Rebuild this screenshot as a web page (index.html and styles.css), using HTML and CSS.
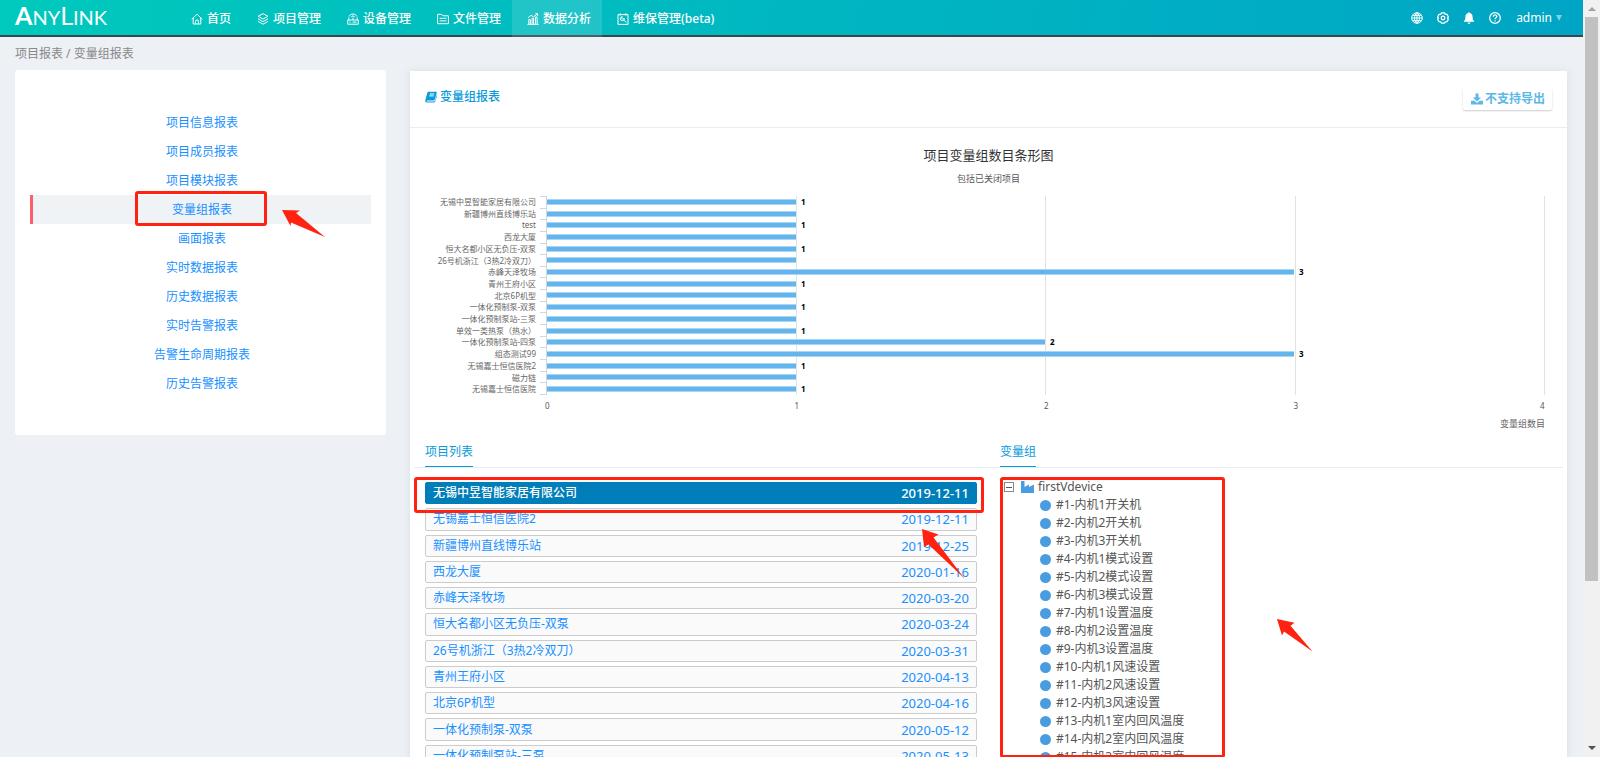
FILE: index.html
```html
<!DOCTYPE html>
<html lang="zh-CN">
<head>
<meta charset="utf-8">
<title>变量组报表</title>
<link rel="stylesheet" href="styles.css">
</head>
<body>
<div class="app">
  <header class="topbar">
    <a class="logo" href="#"><b>A</b><small>NY</small><b class="thin">L</b><small>INK</small></a>
    <nav class="nav">
      <a href="#"><svg viewBox="0 0 12 12"><path d="M.7 6.2 6 1.2l5.3 5M2.2 5v6h7.6V5M4.6 11V8.3a1.4 1.4 0 0 1 2.8 0V11"/></svg>首页</a>
      <a href="#"><svg viewBox="0 0 12 12"><path d="M6 .7 11 3.300 6 6 1 3.300zM1 5.800l5 2.800 5-2.800M1 8.400l5 2.800 5-2.800"/></svg>项目管理</a>
      <a href="#"><svg viewBox="0 0 12 12"><path d="M1.800 7V4.500M10.200 7V4.500M.7 7h10.600v4.200H.7zM2.500 9.100h1.200M5.500 9.100h4M2 3.500C3 .2 9 .2 10 3.500M4 4.300c.8-1.800 3.200-1.800 4 0M6 4.500V7"/></svg>设备管理</a>
      <a href="#"><svg viewBox="0 0 12 12"><path d="M.6 10.700V1.300h4l1.300 1.500h5.500v7.900zM2.600 5.300h6.800M2.600 7.900h6.800"/></svg>文件管理</a>
      <a href="#" class="active"><svg viewBox="0 0 12 12"><path d="M.4 11.400h11.200M1.800 11V6.500h1.500V11M5.100 11V5.300h1.500V11M8.500 11V4h1.600v7M1 4.800l3-2.500 2.500 1.500L10.500.8M8.300.7h2.300v2.200"/></svg>数据分析</a>
      <a href="#"><svg viewBox="0 0 12 12"><path d="M1 1.600h10v9.800H1zM3.200.3v2.300M8.800.3v2.300M6.800 7l2.500 2.500M7.300 5.600A2 2 0 1 1 5.400 3.700L4.500 5l1 1.100z"/></svg>维保管理(beta)</a>
    </nav>
    <div class="tools">
      <a href="#" aria-label="语言"><svg viewBox="0 0 12 12"><circle cx="6" cy="6" r="5.300"/><path d="M.7 6h10.600M6 .7v10.600M1.700 3.300h8.600M1.700 8.700h8.600M6 .7c-3.300 3-3.300 7.600 0 10.600M6 .7c3.300 3 3.300 7.600 0 10.600"/></svg></a>
      <a href="#" aria-label="设置"><svg class="bold" viewBox="0 0 12 12"><path d="M4.500.8h3l.8 1.500 1.700.1 1.400 2.500-.8 1.100.8 1.300-1.400 2.400-1.700.1-.8 1.400h-3l-.8-1.400L2 9.700.6 7.300 1.400 6 .6 4.900 2 2.400l1.700-.1z"/><circle cx="6" cy="6" r="1.800"/></svg></a>
      <a href="#" aria-label="通知"><svg class="solid" viewBox="0 0 12 12"><path d="M6 .2c.6 0 .9.400.9.900C8.800 1.600 9.600 3 9.600 5c0 2.400.5 3.300 1.600 4.300v.5H.8v-.5C1.900 8.300 2.400 7.400 2.400 5c0-2 .8-3.400 2.700-3.900 0-.5.300-.9.900-.9zM4.500 10.400h3c-.2 1-.8 1.400-1.500 1.400s-1.300-.4-1.500-1.400z"/></svg></a>
      <a href="#" aria-label="帮助"><svg class="bold" viewBox="0 0 12 12"><circle cx="6" cy="6" r="5.300"/><path d="M4.300 4.700c0-2.300 3.500-2.300 3.500-.2C7.800 5.700 6 5.700 6 7.200M6 8.200v1.200"/></svg></a>
      <button class="user" type="button">admin<i class="caret"></i></button>
    </div>
  </header>

  <div class="crumbs">项目报表 / 变量组报表</div>

  <main class="columns">
    <nav class="side">
      <a href="#">项目信息报表</a>
      <a href="#">项目成员报表</a>
      <a href="#">项目模块报表</a>
      <a href="#" class="current">变量组报表
        <span class="mark mark-menu"></span>
        <svg class="arrow arrow-menu" viewBox="0 0 44 28"><path d="M0 0 18 .5 14 3 43 27 9 12.500 8.500 16z"/></svg>
      </a>
      <a href="#">画面报表</a>
      <a href="#">实时数据报表</a>
      <a href="#">历史数据报表</a>
      <a href="#">实时告警报表</a>
      <a href="#">告警生命周期报表</a>
      <a href="#">历史告警报表</a>
    </nav>

    <section class="report">
      <div class="report-head">
        <h1><svg viewBox="0 0 12 12"><path d="M3.800.8h7c.8 0 1.100.5.900 1.200L9.800 8.600c-.2.600-.6.900-1.200.9H2.300c-.8 0-1 .900-.2.900h6.700c.7 0 1.100-.3 1.300-.9l1.400-5.200c.5.300.5.600.3 1.200l-1.500 4.800c-.3.900-.9 1.200-1.700 1.200H1.800C.7 11.500 0 10.600.3 9.500L2.200 2.200C2.500 1.300 3 .8 3.800.8z"/><path class="cut" d="M4.800 3h4.400M4.300 4.900h4.400"/></svg>变量组报表</h1>
        <button class="export" type="button"><svg viewBox="0 0 12 12"><path d="M4.500.5h3v4h2.700L6 8.500 1.800 4.500h2.700zM0 7.800h3.500L6 10l2.500-2.200H12v3.700H0z"/></svg>不支持导出</button>
      </div>

      <figure class="chart">
        <figcaption><strong>项目变量组数目条形图</strong><span>包括已关闭项目</span></figcaption>
        <div class="plot">
          <ul class="labels">
            <li>无锡中昱智能家居有限公司</li><li>新疆博州直线博乐站</li><li>test</li><li>西龙大厦</li><li>恒大名都小区无负压-双泵</li><li>26号机浙江（3热2冷双刀）</li><li>赤峰天泽牧场</li><li>青州王府小区</li><li>北京6P机型</li><li>一体化预制泵-双泵</li><li>一体化预制泵站-三泵</li><li>单效一类热泵（热水）</li><li>一体化预制泵站-四泵</li><li>组态测试99</li><li>无锡嘉士恒信医院2</li><li>磁力链</li><li>无锡嘉士恒信医院</li>
          </ul>
          <ul class="ticks"><li></li><li></li><li></li><li></li><li></li><li></li><li></li><li></li><li></li><li></li><li></li><li></li><li></li><li></li><li></li><li></li><li></li></ul>
          <div class="area">
            <div class="grid"><i></i><i></i><i></i><i></i></div>
            <ul class="bars">
              <li><i style="width:25%"></i>1</li><li><i style="width:25%"></i></li><li><i style="width:25%"></i>1</li><li><i style="width:25%"></i></li><li><i style="width:25%"></i>1</li><li><i style="width:25%"></i></li><li><i style="width:75%"></i>3</li><li><i style="width:25%"></i>1</li><li><i style="width:25%"></i></li><li><i style="width:25%"></i>1</li><li><i style="width:25%"></i></li><li><i style="width:25%"></i>1</li><li><i style="width:50%"></i>2</li><li><i style="width:75%"></i>3</li><li><i style="width:25%"></i>1</li><li><i style="width:25%"></i></li><li><i style="width:25%"></i>1</li>
            </ul>
          </div>
          <div class="axis"><span>0</span><span>1</span><span>2</span><span>3</span><span>4</span></div>
        </div>
        <p class="axis-title">变量组数目</p>
      </figure>

      <div class="tabs"><h2>项目列表</h2><h2>变量组</h2></div>

      <div class="lists">
        <div class="projects">
          <a href="#" class="selected"><span>无锡中昱智能家居有限公司</span><time>2019-12-11</time></a>
          <a href="#"><span>无锡嘉士恒信医院2</span><time>2019-12-11</time></a>
          <a href="#"><span>新疆博州直线博乐站</span><time>2019-12-25</time></a>
          <a href="#"><span>西龙大厦</span><time>2020-01-16</time></a>
          <a href="#"><span>赤峰天泽牧场</span><time>2020-03-20</time></a>
          <a href="#"><span>恒大名都小区无负压-双泵</span><time>2020-03-24</time></a>
          <a href="#"><span>26号机浙江（3热2冷双刀）</span><time>2020-03-31</time></a>
          <a href="#"><span>青州王府小区</span><time>2020-04-13</time></a>
          <a href="#"><span>北京6P机型</span><time>2020-04-16</time></a>
          <a href="#"><span>一体化预制泵-双泵</span><time>2020-05-12</time></a>
          <a href="#"><span>一体化预制泵站-三泵</span><time>2020-05-13</time></a>
          <span class="mark mark-project"></span>
          <svg class="arrow arrow-project" viewBox="0 0 43 50"><path d="M0 0 16.500 5.500 11.500 8.500 42.500 49.500 6.500 15.500 2 18z"/></svg>
        </div>
        <div class="tree">
          <div class="root"><button class="toggle" type="button" aria-label="收起"></button><svg viewBox="0 0 13 12"><path d="M0 0h3.500v6L8 3.500V6l5-2.500V12H0z"/></svg>firstVdevice</div>
          <ul>
            <li>#1-内机1开关机</li><li>#2-内机2开关机</li><li>#3-内机3开关机</li><li>#4-内机1模式设置</li><li>#5-内机2模式设置</li><li>#6-内机3模式设置</li><li>#7-内机1设置温度</li><li>#8-内机2设置温度</li><li>#9-内机3设置温度</li><li>#10-内机1风速设置</li><li>#11-内机2风速设置</li><li>#12-内机3风速设置</li><li>#13-内机1室内回风温度</li><li>#14-内机2室内回风温度</li><li>#15-内机3室内回风温度</li>
          </ul>
          <span class="mark mark-tree"></span>
          <svg class="arrow arrow-tree" viewBox="0 0 36 33"><path d="M0 0 17.500 3.800 13.500 6.800 35.500 32.500 7 12.500 5 16.500z"/></svg>
        </div>
      </div>
    </section>
  </main>
</div>
<div class="scrollbar"><i class="up"></i><i class="thumb"></i><i class="down"></i></div>
</body>
</html>
```
FILE: styles.css
```css
* { box-sizing: border-box; }
body {
  margin: 0;
  display: flex;
  height: 100vh;
  overflow: hidden;
  background: #edf1f5;
  color: #555;
  font: 12px/18px "Noto Sans", "Noto Sans CJK SC", sans-serif;
}
a { color: #1890ff; text-decoration: none; }
ul { list-style: none; margin: 0; padding: 0; }
button { font: inherit; border: 0; background: none; padding: 0; }
h1, h2, figure, p { margin: 0; }
svg { width: 12px; height: 12px; flex: none; }
.app { flex: 1; min-width: 0; }

.topbar {
  display: flex;
  height: 37px;
  background: linear-gradient(100deg, #00c9bd, #00a5c5);
  border-bottom: 2px solid #37474a;
  background-origin: border-box;
}
.logo {
  width: 176px;
  padding-left: 15px;
  color: #fff;
  font: 25px/31px Lato, sans-serif;
  flex: none;
}
.logo b { font-weight: 700; }
.logo .thin { font-weight: 400; }
.logo small { font-size: 20px; }
.nav { display: flex; flex: 1; }
.nav a {
  display: flex;
  align-items: center;
  gap: 4px;
  height: 37px;
  padding: 0 11px 0 15px;
  color: #fff;
  font-weight: 500;
  white-space: nowrap;
}
.nav a.active { background: rgba(255, 255, 255, .13); }
.nav svg, .tools svg { fill: none; stroke: #fff; stroke-width: 1; }
.tools { display: flex; align-items: center; gap: 14px; padding-right: 21px; }
.tools a { display: flex; }
.tools .bold { stroke-width: 1.3; }
.tools .solid { fill: #fff; stroke: none; }
.user { display: flex; align-items: center; gap: 4px; color: #fff; padding-left: 1px; }
.caret {
  border: 3px solid transparent;
  border-top: 6px solid #7fd2e2;
  border-bottom: 0;
}

.crumbs { padding: 8px 15px 7px; color: #888; }
.columns { display: flex; align-items: flex-start; padding: 0 16px 0 15px; gap: 24px; }
.side {
  flex: 0 0 371px;
  padding: 38px 15px 37px;
  background: #fff;
  border-radius: 3px;
  text-align: center;
}
.side a {
  display: block;
  position: relative;
  line-height: 29px;
  border-left: 3px solid transparent;
}
.side .current { background: #f0f3f6; border-color: #ff5c6c; }

.mark {
  position: absolute;
  border: 3px solid #ff2211;
  border-radius: 3px;
  pointer-events: none;
}
.arrow { position: absolute; fill: #ff2211; pointer-events: none; }
.mark-menu { inset: -4px 104px -2px 102px; }
.arrow-menu { left: 249px; top: 15px; width: 44px; height: 28px; }
.mark-project { left: -11px; right: -7px; top: -5px; height: 36px; }
.arrow-project { right: 12px; top: 47px; width: 43px; height: 50px; }
.mark-tree { left: 0; top: -1px; width: 225px; height: 281px; }
.arrow-tree { left: 277px; top: 141px; width: 36px; height: 33px; }

.report {
  flex: 1;
  min-width: 0;
  margin-top: 1px;
  background: #fff;
  box-shadow: 0 0 8px rgba(60, 90, 110, .12);
}
.report-head {
  display: flex;
  justify-content: space-between;
  align-items: flex-start;
  height: 57px;
  padding: 17px 15px 0;
  border-bottom: 1px solid #eaedf0;
}
.report-head h1 {
  display: flex;
  align-items: center;
  gap: 3px;
  color: #0a9bdc;
  font-size: 12px;
  font-weight: 500;
}
.report-head h1 svg { fill: #0a9bdc; }
.report-head .cut { stroke: #fff; stroke-width: 1; }
.export {
  display: flex;
  align-items: center;
  gap: 2px;
  height: 22px;
  padding: 0 7px 0 8px;
  color: #5bb8e8;
  font-weight: 700;
  border-radius: 2px;
  box-shadow: 0 1px 2px rgba(0, 0, 0, .2);
}
.export svg { fill: #5bb8e8; }

.chart { padding: 17px 22px 0 0; }
.chart figcaption {
  display: flex;
  flex-direction: column;
  align-items: center;
  gap: 6px;
  padding-left: 22px;
  color: #333;
}
.chart figcaption strong { font-size: 13px; line-height: 20px; font-weight: 400; }
.chart figcaption span { font-size: 9px; line-height: 16px; color: #555; }
.plot {
  display: grid;
  grid-template-columns: 126px 11px 1fr;
  grid-template-rows: 199px 21px;
  padding-top: 9px;
}
.labels, .ticks, .bars { display: flex; flex-direction: column; height: 100%; }
.labels li, .ticks li, .bars li { flex: 1; min-height: 0; }
.labels { font-size: 8px; line-height: 11px; text-align: right; white-space: nowrap; color: #666; }
.ticks { padding-left: 4px; border-right: 1px solid #c8dae6; }
.ticks li { border-top: 1px solid #c8dae6; }
.ticks li:last-child { border-bottom: 1px solid #c8dae6; }
.area { display: grid; }
.area > * { grid-area: 1 / 1; }
.grid { display: grid; grid-template-columns: repeat(4, 1fr); }
.grid i { border-right: 1px solid #e2e2e2; }
.bars { padding-right: 2px; }
.bars li {
  display: flex;
  align-items: center;
  gap: 5px;
  font-size: 8px;
  line-height: 10px;
  font-weight: 700;
  color: #000;
}
.bars i { height: 6px; background: #63b5ec; border: solid #a9d6f4; border-width: 1px 0; }
.axis {
  grid-column: 3;
  display: grid;
  grid-template-columns: repeat(4, 1fr) 0;
  font-size: 8px;
  line-height: 21px;
}
.axis span { width: 4px; margin-left: -2px; }
.axis span:last-child { margin-left: -5px; }
.axis-title { text-align: right; font-size: 9px; line-height: 16px; color: #666; }

.tabs {
  display: grid;
  grid-template-columns: 575px 1fr;
  margin: 6px 4px 0;
  padding-left: 11px;
  border-bottom: 1px solid #e8ecf4;
}
.tabs h2 {
  justify-self: start;
  color: #0a9bdc;
  font-size: 12px;
  font-weight: 400;
  line-height: 28px;
  border-bottom: 1px solid #0a9bdc;
}
.lists {
  display: grid;
  grid-template-columns: 552px 1fr;
  gap: 23px;
  align-items: start;
  padding: 14px 15px 0;
}
.projects {
  position: relative;
  display: grid;
  grid-auto-rows: 1fr;
  gap: 4px;
  height: 285px;
}
.projects a {
  display: flex;
  align-items: center;
  justify-content: space-between;
  padding: 0 7px;
  background: #fafafa;
  border: 1px solid #ccc;
  border-radius: 2px;
}
.projects time { font-size: 13px; }
.projects .selected { background: #007eba; border-color: #007eba; color: #fff; font-weight: 500; }
.tree { position: relative; margin-top: -4px; }
.root { display: flex; align-items: center; padding-left: 4px; }
.root svg { width: 13px; fill: #4a9ce0; margin: 0 4px 0 7px; }
.toggle {
  width: 10px;
  height: 10px;
  border: 1px solid #888;
  background: linear-gradient(#555, #555) center / 6px 1px no-repeat;
}
.tree li { display: flex; align-items: center; gap: 5px; padding-left: 40px; }
.tree li::before { content: ""; width: 11px; height: 11px; border-radius: 50%; background: #4a9ce0; }

.scrollbar {
  flex: 0 0 17px;
  display: flex;
  flex-direction: column;
  align-items: center;
  background: #f1f1f1;
}
.scrollbar .up { margin: 7px 0 6px; border: 4px solid transparent; border-bottom-color: #a3a3a3; border-top: 0; }
.scrollbar .thumb { width: 13px; height: 564px; background: #c1c1c1; }
.scrollbar .down { margin: auto 0 7px; border: 4px solid transparent; border-top-color: #505050; border-bottom: 0; }
```
